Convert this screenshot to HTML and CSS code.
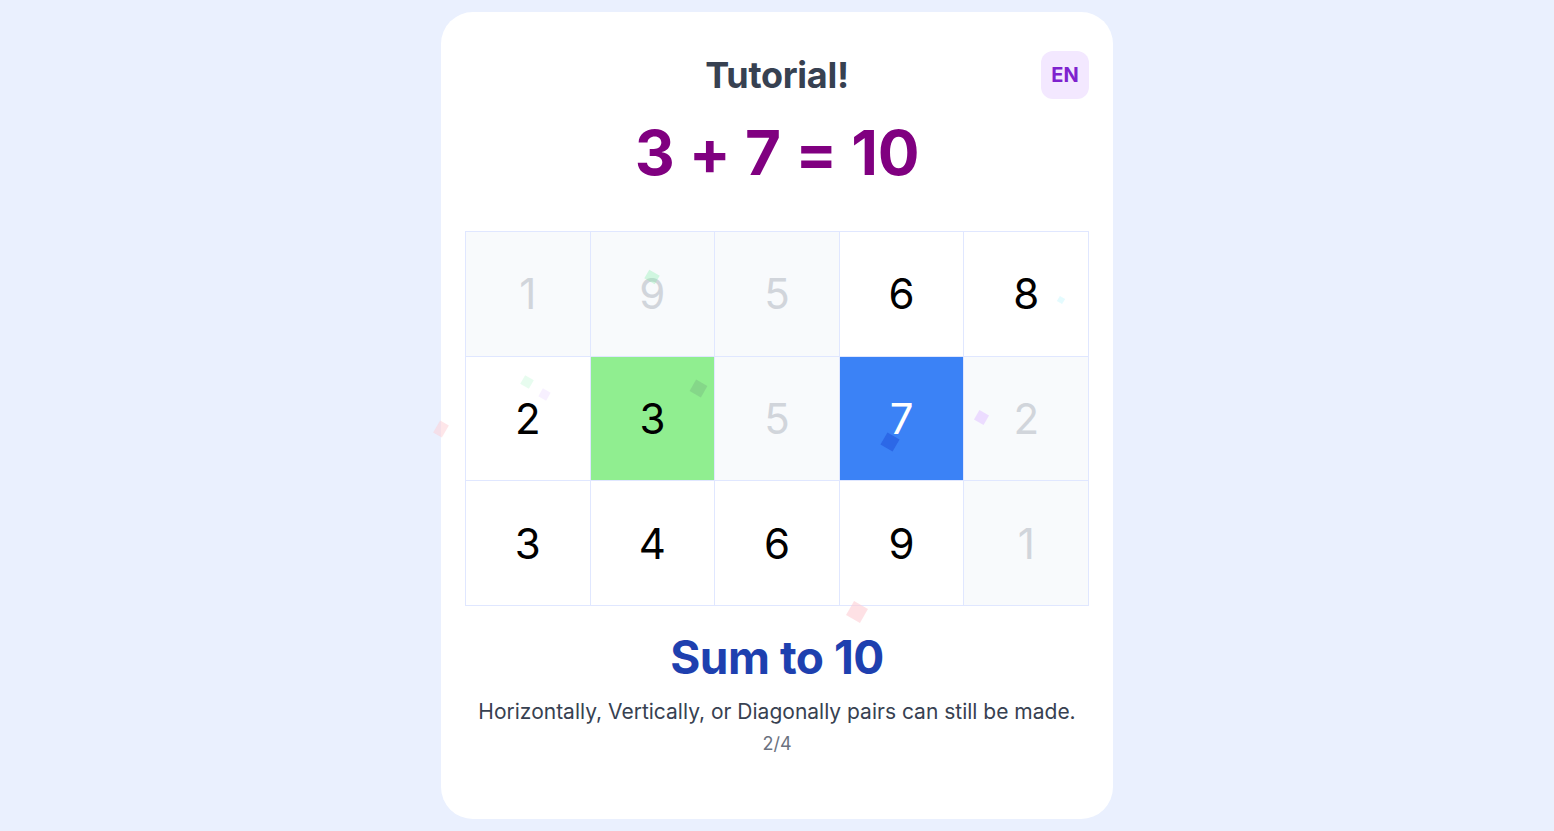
FILE: index.html
```html
<!DOCTYPE html>
<html lang="en">
<head>
<meta charset="utf-8">
<title>Tutorial</title>
<link rel="stylesheet" href="styles.css">
</head>
<body>
<main class="page">
  <section class="card">
    <header class="head">
      <h1 class="title">Tutorial!</h1>
      <button class="lang">EN</button>
    </header>
    <div class="equation">3 + 7 = 10</div>
    <div class="board">
      <div class="cell used">1</div>
      <div class="cell used">9</div>
      <div class="cell used">5</div>
      <div class="cell">6</div>
      <div class="cell">8</div>
      <div class="cell">2</div>
      <div class="cell green">3</div>
      <div class="cell used">5</div>
      <div class="cell blue">7</div>
      <div class="cell used">2</div>
      <div class="cell">3</div>
      <div class="cell">4</div>
      <div class="cell">6</div>
      <div class="cell">9</div>
      <div class="cell used">1</div>
      <span class="confetti c1"></span>
      <span class="confetti c2"></span>
      <span class="confetti c3"></span>
      <span class="confetti c4"></span>
      <span class="confetti c5"></span>
      <span class="confetti c6"></span>
      <span class="confetti c7"></span>
      <span class="confetti c8"></span>
      <span class="confetti c9"></span>
    </div>
    <h2 class="subtitle">Sum to 10</h2>
    <p class="desc">Horizontally, Vertically, or Diagonally pairs can still be made.</p>
    <p class="step">2/4</p>
  </section>
</main>
</body>
</html>
```

FILE: styles.css
```css
* { box-sizing: border-box; }
html, body {
  margin: 0;
  padding: 0;
  background: #eaf0fe;
  font-family: Inter, "Noto Sans", sans-serif;
}
.page {
  display: flex;
  justify-content: center;
  padding-top: 12px;
  min-height: 831px;
}
.card {
  width: 672px;
  height: 807px;
  background: #ffffff;
  border-radius: 32px;
  padding: 39px 24px 24px;
  display: flex;
  flex-direction: column;
  align-items: center;
}
.head {
  position: relative;
  width: 100%;
  display: flex;
  justify-content: center;
  align-items: center;
  height: 48px;
}
.title {
  margin: 0;
  font-size: 36px;
  font-weight: 700;
  color: #374151;
  letter-spacing: -0.3px;
  line-height: 46px;
}
.lang {
  position: absolute;
  right: 0;
  top: 0;
  width: 48px;
  height: 48px;
  border: none;
  border-radius: 12px;
  background: #f3e8ff;
  color: #7e22ce;
  font-family: Inter, sans-serif;
  font-weight: 700;
  font-size: 20px;
  padding: 0;
}
.equation {
  margin-top: 16px;
  font-size: 62px;
  font-weight: 700;
  color: #800080;
  line-height: 76px;
  letter-spacing: -0.3px;
}
.board {
  position: relative;
  margin-top: 40px;
  width: 624px;
  height: 375px;
  display: grid;
  grid-template-columns: repeat(5, 1fr);
  grid-template-rows: repeat(3, 1fr);
  border-top: 1px solid #e0e7ff;
  border-left: 1px solid #e0e7ff;
}
.cell {
  display: flex;
  align-items: center;
  justify-content: center;
  border-right: 1px solid #e0e7ff;
  border-bottom: 1px solid #e0e7ff;
  font-size: 42px;
  color: #000000;
  background: #ffffff;
}
.cell.used {
  background: #f8fafc;
  color: #d1d5db;
}
.cell.green { background: #90ee90; }
.cell.blue { background: #3b82f6; color: #ffffff; }
.confetti {
  position: absolute;
  width: 12px;
  height: 12px;
  transform: rotate(30deg);
  opacity: 0.35;
}
.c1 { left: 180px; top: 40px; background: #86efac; width: 12px; height: 10px; }
.c2 { left: 56px; top: 145px; background: #bbf7d0; width: 10px; height: 10px; }
.c3 { left: 74px; top: 158px; background: #e9d5ff; width: 9px; height: 9px; }
.c4 { left: 226px; top: 150px; background: #4b5563; opacity: 0.15; width: 13px; height: 13px; }
.c5 { left: 417px; top: 203px; background: #1d4ed8; opacity: 0.5; width: 14px; height: 14px; }
.c6 { left: 510px; top: 180px; background: #e9d5ff; opacity: 0.8; width: 11px; height: 11px; }
.c7 { left: 592px; top: 65px; background: #a5f3fc; opacity: 0.3; width: 6px; height: 6px; }
.c8 { left: 383px; top: 372px; background: #fecdd3; opacity: 0.6; width: 16px; height: 16px; }
.c9 { left: -30px; top: 190px; background: #fecdd3; opacity: 0.5; width: 10px; height: 14px; }
.subtitle {
  margin: 23px 0 0;
  font-size: 46px;
  font-weight: 700;
  color: #1e40af;
  line-height: 56px;
  letter-spacing: -0.5px;
}
.desc {
  margin: 12px 0 0;
  font-size: 21px;
  color: #374151;
  line-height: 30px;
}
.step {
  margin: 5px 0 0;
  font-size: 18px;
  color: #6b7280;
  line-height: 24px;
}
```
